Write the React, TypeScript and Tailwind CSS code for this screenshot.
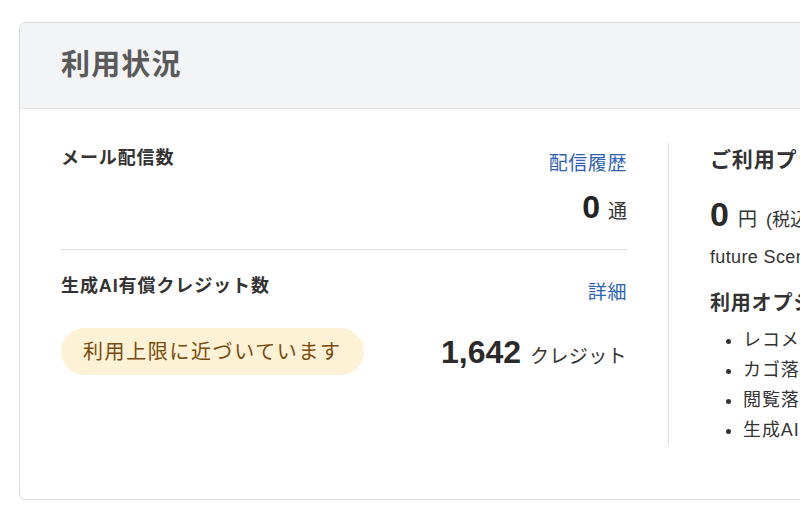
const options = ["レコメンドメール", "カゴ落ちメール", "閲覧落ちメール", "生成AIクレジット"];

export default function App() {
  return (
    <div
      className="h-[515px] w-[800px] overflow-hidden bg-white text-[#333]"
      style={{ fontFamily: '"Liberation Sans", "Noto Sans CJK JP", sans-serif' }}
    >
      <div className="pl-[19px] pt-[22px]">
        <section className="w-[1300px] overflow-hidden rounded-md border border-[#dcdcdc] bg-white">
          {/* Header */}
          <header className="flex h-[86px] items-center border-b border-[#e2e2e2] bg-[#f3f4f6] px-[41px]">
            <h2 className="text-[29px] font-bold leading-none tracking-[0.04em] text-[#5a5a5a]">利用状況</h2>
          </header>

          {/* Body */}
          <div className="flex px-[41px] pb-[54px] pt-[34px]">
            <div className="w-[566px] shrink-0">
              {/* Mail */}
              <div className="pb-[22px]">
                <div className="flex items-start justify-between">
                  <h3 className="mt-[1px] text-[18px] font-bold leading-[28px] tracking-[0.05em]">メール配信数</h3>
                  <a className="mt-[7px] text-[19px] leading-[28px] tracking-[0.03em] text-[#2f62b5]" href="#">
                    配信履歴
                  </a>
                </div>
                <div className="mt-[9px] flex items-baseline justify-end gap-[8px]">
                  <span className="text-[32px] font-bold leading-[40px] text-[#222]">0</span>
                  <span className="text-[19px] text-[#333]">通</span>
                </div>
              </div>
              <div className="h-px bg-[#dedede]" />
              {/* AI credit */}
              <div className="pt-[22px]">
                <div className="flex items-start justify-between">
                  <h3 className="text-[18px] font-bold leading-[28px] tracking-[0.05em]">生成AI有償クレジット数</h3>
                  <a className="mt-[7px] text-[19px] leading-[28px] tracking-[0.03em] text-[#2f62b5]" href="#">
                    詳細
                  </a>
                </div>
                <div className="mt-[21px] flex items-center justify-between">
                  <span className="flex h-[47px] items-center rounded-full bg-[#fdf2d5] px-[22px] text-[20px] tracking-[0.08em] text-[#7a4a0c]">
                    利用上限に近づいています
                  </span>
                  <div className="flex items-baseline gap-[9px]">
                    <span className="text-[32px] font-bold leading-[40px] text-[#2a2a2a]">1,642</span>
                    <span className="text-[19px] tracking-[0.02em] text-[#333]">クレジット</span>
                  </div>
                </div>
              </div>
            </div>

            <div className="mx-[41px] w-px shrink-0 bg-[#dedede]" />

            {/* Plan */}
            <div className="w-[566px] shrink-0">
              <h3 className="mt-[2px] text-[21px] font-bold leading-[30px] tracking-[0.04em]">ご利用プラン</h3>
              <div className="mt-[19px] flex items-baseline gap-[9px]">
                <span className="text-[34px] font-bold leading-[40px] text-[#2a2a2a]">0</span>
                <span className="text-[19px]">円</span>
                <span className="text-[18px]">(税込) / 月</span>
              </div>
              <p className="mt-[9px] text-[18px] leading-[26px] tracking-[0.02em]">future Scene スタンダードプラン</p>
              <h3 className="mt-[19px] text-[20px] font-bold leading-[28px] tracking-[0.04em]">利用オプション</h3>
              <ul className="mt-[8px] list-disc pl-[33px] text-[18px] leading-[30px] tracking-[0.05em] marker:text-[#333]">
                {options.map((o) => (
                  <li key={o}>{o}</li>
                ))}
              </ul>
            </div>
          </div>
        </section>
      </div>
    </div>
  );
}
